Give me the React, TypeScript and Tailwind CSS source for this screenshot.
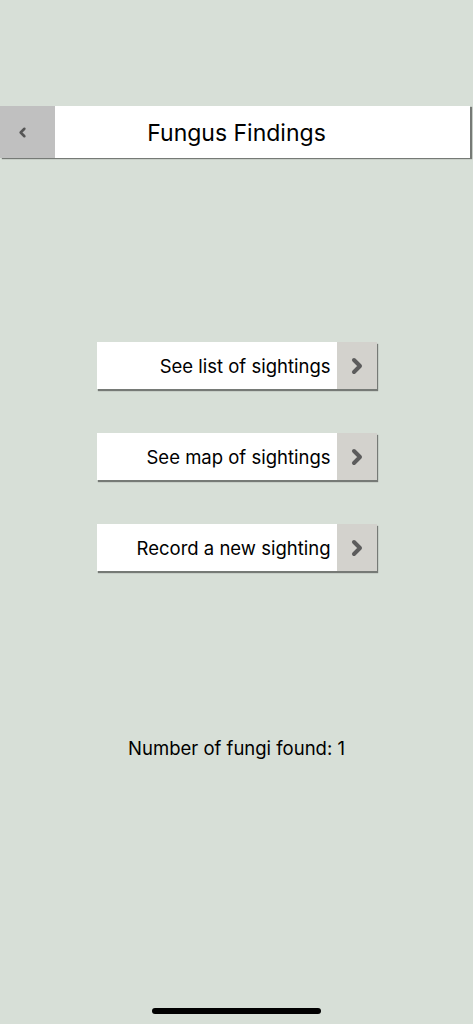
import { ChevronLeft, ChevronRight } from "lucide-react";

const actions = ["See list of sightings", "See map of sightings", "Record a new sighting"];

function ActionButton({ label }: { label: string }) {
  return (
    <button className="mx-auto flex h-[47px] w-[280px] items-stretch bg-white shadow-[1px_2px_1px_rgba(0,0,0,0.45)]">
      <span className="flex flex-1 items-center justify-end pt-[2px] pr-[6px] text-[18.5px] text-black">{label}</span>
      <span className="flex w-[40px] items-center justify-center bg-[#d3d2cd]">
        <ChevronRight className="h-[24px] w-[24px] text-[#5c5c5c]" strokeWidth={4} />
      </span>
    </button>
  );
}

export default function App() {
  return (
    <div className="relative flex h-[1024px] w-full flex-col bg-[#d7dfd7] font-['Inter',sans-serif]">
      <div className="mt-[106px] mr-[3px] flex h-[52px] bg-white shadow-[2px_1px_1px_rgba(0,0,0,0.45)]">
        <button className="flex w-[55px] items-center justify-center bg-[#c0c0c0]">
          <ChevronLeft className="mr-[10px] mt-[1px] h-[15px] w-[15px] text-[#555]" strokeWidth={4} />
        </button>
        <div className="flex flex-1 items-center justify-center pr-[52px] pt-[3px] text-[23px] text-black">
          Fungus Findings
        </div>
      </div>

      <div className="mt-[184px] flex flex-col gap-[44px]">
        {actions.map((a) => (
          <ActionButton key={a} label={a} />
        ))}
      </div>

      <p className="mt-[164px] text-center text-[18.5px] leading-[26px] text-black">Number of fungi found: 1</p>

      <div className="absolute bottom-[10px] left-[152px] h-[6px] w-[169px] rounded-full bg-black" />
    </div>
  );
}
